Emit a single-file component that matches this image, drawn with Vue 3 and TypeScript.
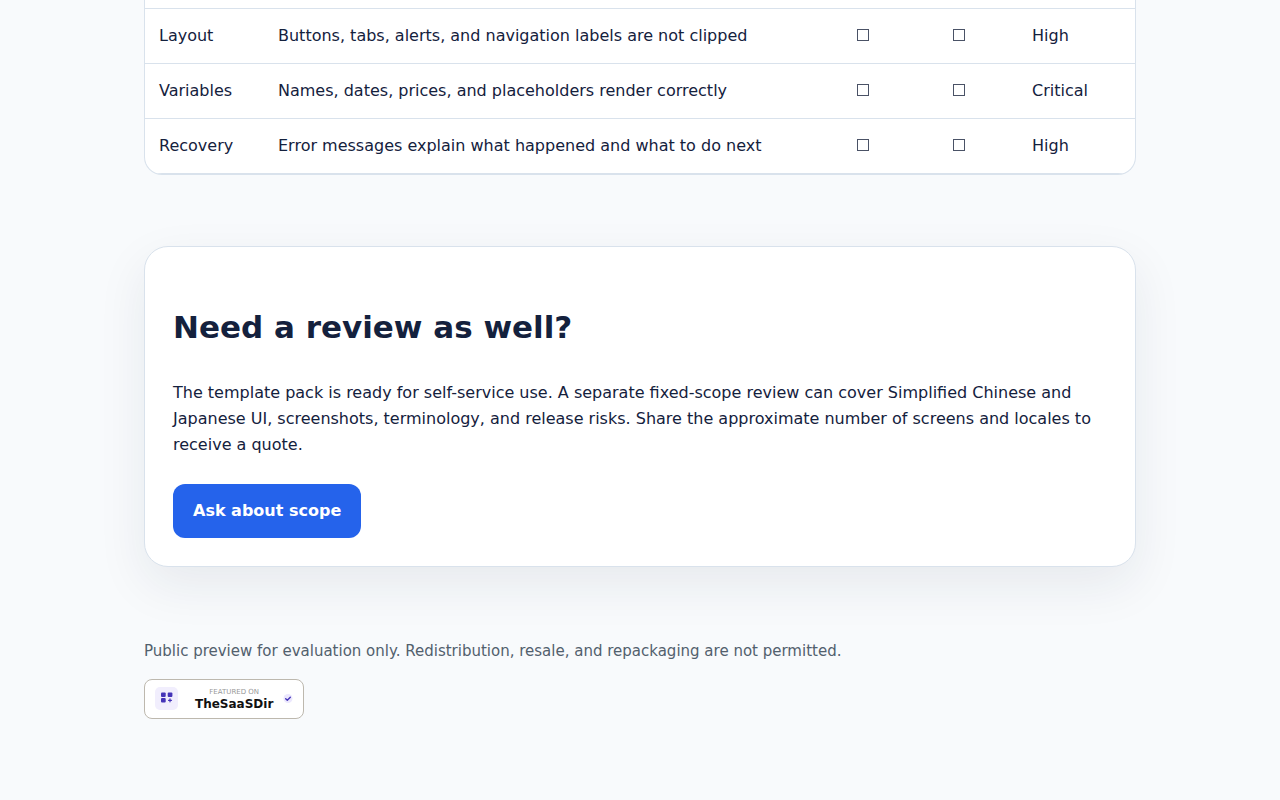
<script setup lang="ts">
import { reactive } from 'vue'

interface Check {
  area: string
  check: string
  pass: boolean
  fail: boolean
  severity: string
}

const checks = reactive<Check[]>([
  { area: 'Layout', check: 'Buttons, tabs, alerts, and navigation labels are not clipped', pass: false, fail: false, severity: 'High' },
  { area: 'Variables', check: 'Names, dates, prices, and placeholders render correctly', pass: false, fail: false, severity: 'Critical' },
  { area: 'Recovery', check: 'Error messages explain what happened and what to do next', pass: false, fail: false, severity: 'High' },
])
</script>

<template>
  <main class="page">
    <div class="table-wrap">
      <table>
        <colgroup>
          <col class="col-area" />
          <col />
          <col class="col-pass" />
          <col class="col-fail" />
          <col class="col-severity" />
        </colgroup>
        <tbody>
          <tr v-for="row in checks" :key="row.area">
            <td>{{ row.area }}</td>
            <td>{{ row.check }}</td>
            <td><input v-model="row.pass" type="checkbox" :aria-label="`${row.area} pass`" /></td>
            <td><input v-model="row.fail" type="checkbox" :aria-label="`${row.area} fail`" /></td>
            <td>{{ row.severity }}</td>
          </tr>
        </tbody>
      </table>
    </div>

    <section class="card">
      <h2>Need a review as well?</h2>
      <p>
        The template pack is ready for self-service use. A separate fixed-scope review can cover Simplified Chinese and
        Japanese UI, screenshots, terminology, and release risks. Share the approximate number of screens and locales to
        receive a quote.
      </p>
      <a class="button" href="#scope">Ask about scope</a>
    </section>

    <footer>
      <p>Public preview for evaluation only. Redistribution, resale, and repackaging are not permitted.</p>
      <a class="badge" href="#featured">
        <svg class="badge-logo" viewBox="0 0 24 24" aria-hidden="true">
          <rect width="23" height="23" rx="5" fill="#f1eefd" />
          <g fill="#4534b8">
            <rect x="6" y="5.6" width="4.7" height="4.5" rx="1" />
            <rect x="12.7" y="5.6" width="4.7" height="4.5" rx="1" />
            <rect x="6" y="11" width="4.7" height="4.5" rx="1" />
          </g>
          <path d="M15 11.8v3M13.5 13.3h3" stroke="#4534b8" stroke-width="1.2" stroke-linecap="round" />
        </svg>
        <span class="badge-text">
          <span class="badge-kicker">FEATURED ON</span>
          <strong>TheSaaSDir</strong>
        </span>
        <svg class="badge-check" viewBox="0 0 10 10" aria-hidden="true">
          <circle cx="5" cy="4.5" r="4.5" fill="#ebe7fd" />
          <path d="M2.7 4.8l1.6 1.5 3-3" fill="none" stroke="#4534b8" stroke-width="1.4" stroke-linecap="round" stroke-linejoin="round" />
        </svg>
      </a>
    </footer>
  </main>
</template>

<style>
body {
  margin: 0;
  background: #f8fafc;
}
</style>

<style scoped>
.page {
  max-width: 992px;
  margin: 0 auto;
  padding-bottom: 80px;
  color: #14213d;
  font: 16px/26px "DejaVu Sans", sans-serif;
}

.table-wrap {
  overflow: hidden;
  padding-top: 8px;
  border: 1px solid #d9e2ec;
  border-top: 0;
  border-radius: 0 0 18px 18px;
  background: #fff;
}

table {
  width: 100%;
  table-layout: fixed;
  border-spacing: 0;
  border-top: 1px solid #d9e2ec;
}

.col-area {
  width: 119px;
}

.col-pass {
  width: 96px;
}

.col-fail {
  width: 80px;
}

.col-severity {
  width: 117px;
}

td {
  padding: 14px;
  border-bottom: 1px solid #d9e2ec;
  vertical-align: top;
}

input {
  appearance: none;
  box-sizing: border-box;
  width: 12px;
  height: 12px;
  margin: 0 1px;
  border: 1px solid #4a5266;
}

input:checked {
  background: #2563eb;
}

.card {
  margin-top: 71px;
  padding: 28px;
  border: 1px solid #d9e2ec;
  border-radius: 24px;
  background: #fff;
  box-shadow: 0 18px 50px rgba(20, 33, 61, 0.08);
}

h2 {
  margin: 26px 0 27px;
  font-size: 31px;
  line-height: 52px;
}

.card p {
  margin: 0 0 26px;
}

.button {
  display: inline-block;
  padding: 14px 20px;
  border-radius: 12px;
  background: #2563eb;
  color: #fff;
  font-weight: 700;
  text-decoration: none;
  vertical-align: top;
}

footer {
  margin-top: 72px;
  color: #52606d;
  font-size: 15px;
  line-height: 24px;
}

footer p {
  margin: 0 0 16px;
}

.badge {
  display: flex;
  align-items: center;
  box-sizing: border-box;
  width: 160px;
  height: 40px;
  padding: 0 10px;
  border: 1px solid #bdb8ae;
  border-radius: 8px;
  background: #fff;
  text-decoration: none;
}

.badge-logo {
  width: 24px;
  height: 24px;
}

.badge-text {
  display: flex;
  flex-direction: column;
  align-items: center;
  margin-left: 16px;
  color: #111;
  font-size: 12px;
  line-height: 14px;
}

.badge-kicker {
  color: #999;
  font-size: 7px;
  line-height: 10px;
}

.badge-check {
  width: 10px;
  height: 10px;
  margin-left: auto;
}
</style>
